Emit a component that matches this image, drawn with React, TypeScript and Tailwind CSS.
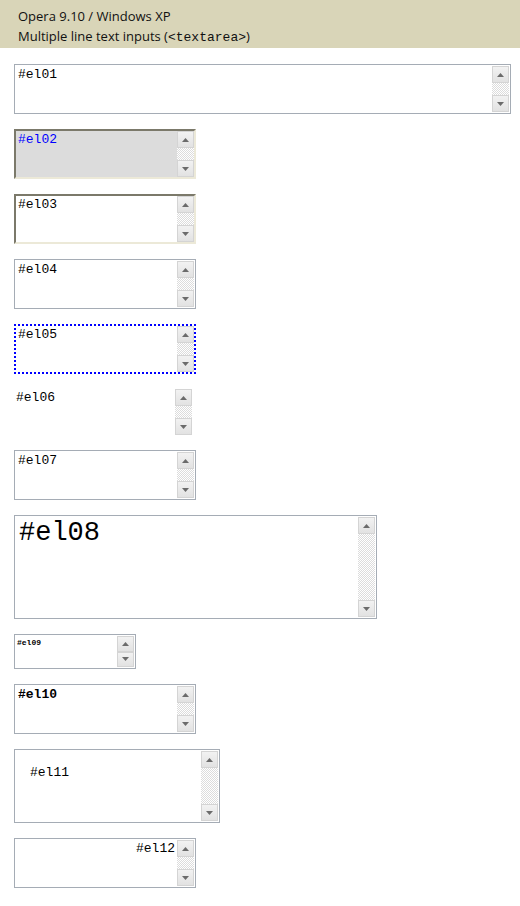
import React from "react";

type BoxProps = {
  id: string;
  width: string;
  height: string;
  border: string;
  text?: string;
  pad?: string;
  scroll?: string;
};

// XP-style scrollbar: two arrow buttons and a dithered track
function ScrollBar({ small }: { small?: boolean }) {
  return (
    <div className="flex w-[17px] shrink-0 flex-col">
      <div className="flex h-[17px] items-center justify-center border border-[#d4d4d4] bg-gradient-to-b from-[#f2f2f2] to-[#e2e2e2]">
        <svg width="7" height="4" viewBox="0 0 7 4">
          <path d="M3.5 0 L7 4 L0 4 Z" fill="#6b6b6b" />
        </svg>
      </div>
      <div
        className={
          small
            ? "h-0"
            : "flex-1 bg-[repeating-conic-gradient(#dcdcdc_0_25%,#ffffff_0_50%)] bg-[length:2px_2px]"
        }
      />
      <div className="flex h-[17px] items-center justify-center border border-[#d4d4d4] bg-gradient-to-b from-[#f2f2f2] to-[#e2e2e2]">
        <svg width="7" height="4" viewBox="0 0 7 4">
          <path d="M0 0 L7 0 L3.5 4 Z" fill="#6b6b6b" />
        </svg>
      </div>
    </div>
  );
}

function Area({ id, width, height, border, text, pad, scroll }: BoxProps) {
  return (
    <div className={`flex ${width} ${height} ${border}`}>
      <div className={`min-w-0 flex-1 whitespace-pre ${pad ?? "pl-[3px] pt-[2px]"} ${text ?? "text-[13px] leading-[15px] text-black"}`}>
        {id}
      </div>
      <div className={`flex ${scroll ?? "py-[1px] pr-[1px]"}`}>
        <ScrollBar small={height === "h-[35px]"} />
      </div>
    </div>
  );
}

const plain = "border border-[#a5acb5] bg-white";
const inset =
  "border-2 border-t-[#7b796a] border-l-[#7b796a] border-b-[#ece9d8] border-r-[#ece9d8]";

export default function App() {
  return (
    <div className="min-h-[906px] w-[520px] bg-white font-['Liberation_Mono',monospace]">
      <header className="h-[48px] bg-[#d9d5b8] pl-[18px] pt-[6px] font-['Open_Sans',sans-serif] text-[13px] font-medium leading-[20px] text-[#111111]">
        <div>Opera 9.10 / Windows XP</div>
        <div>
          Multiple line text inputs (
          <span className="font-['Liberation_Mono',monospace] text-[13px] font-normal">&lt;textarea&gt;</span>)
        </div>
      </header>

      <div className="flex flex-col gap-[15px] pl-[14px] pt-[16px]">
        <Area id="#el01" width="w-[497px]" height="h-[50px]" border={plain} />
        <Area
          id="#el02"
          width="w-[182px]"
          height="h-[50px]"
          border={`${inset} bg-[#dcdcdc]`}
          pad="pl-[2px] pt-[1px]"
          text="text-[13px] leading-[15px] text-[#0000ff]"
          scroll="py-0 pr-0"
        />
        <Area
          id="#el03"
          width="w-[182px]"
          height="h-[50px]"
          border={`${inset} bg-white`}
          pad="pl-[2px] pt-[1px]"
          scroll="py-0 pr-0"
        />
        <Area id="#el04" width="w-[182px]" height="h-[50px]" border={plain} />
        <Area
          id="#el05"
          width="w-[182px]"
          height="h-[50px]"
          border="border-2 border-dotted border-[#0000ff] bg-white"
          pad="pl-[2px] pt-[1px]"
          scroll="py-0 pr-0"
        />
        <Area
          id="#el06"
          width="w-[178px]"
          height="h-[46px]"
          border="bg-white"
          pad="pl-[2px] pt-[1px]"
          scroll="py-0 pr-0"
        />
        <Area id="#el07" width="w-[182px]" height="h-[50px]" border={plain} />
        <Area
          id="#el08"
          width="w-[363px]"
          height="h-[104px]"
          border={plain}
          pad="pl-[4px] pt-[2px]"
          text="text-[27px] leading-[30px] text-black"
        />
        <Area
          id="#el09"
          width="w-[122px]"
          height="h-[35px]"
          border={plain}
          pad="pl-[2px] pt-[3px]"
          text="text-[8px] leading-[10px] font-bold text-black"
        />
        <Area
          id="#el10"
          width="w-[182px]"
          height="h-[50px]"
          border={plain}
          text="text-[13px] leading-[15px] font-bold text-black"
        />
        <Area
          id="#el11"
          width="w-[206px]"
          height="h-[74px]"
          border={plain}
          pad="pl-[15px] pt-[15px]"
        />
        <Area
          id="#el12"
          width="w-[182px]"
          height="h-[50px]"
          border={plain}
          pad="pr-[2px] pt-[2px] text-right"
        />
      </div>
    </div>
  );
}
